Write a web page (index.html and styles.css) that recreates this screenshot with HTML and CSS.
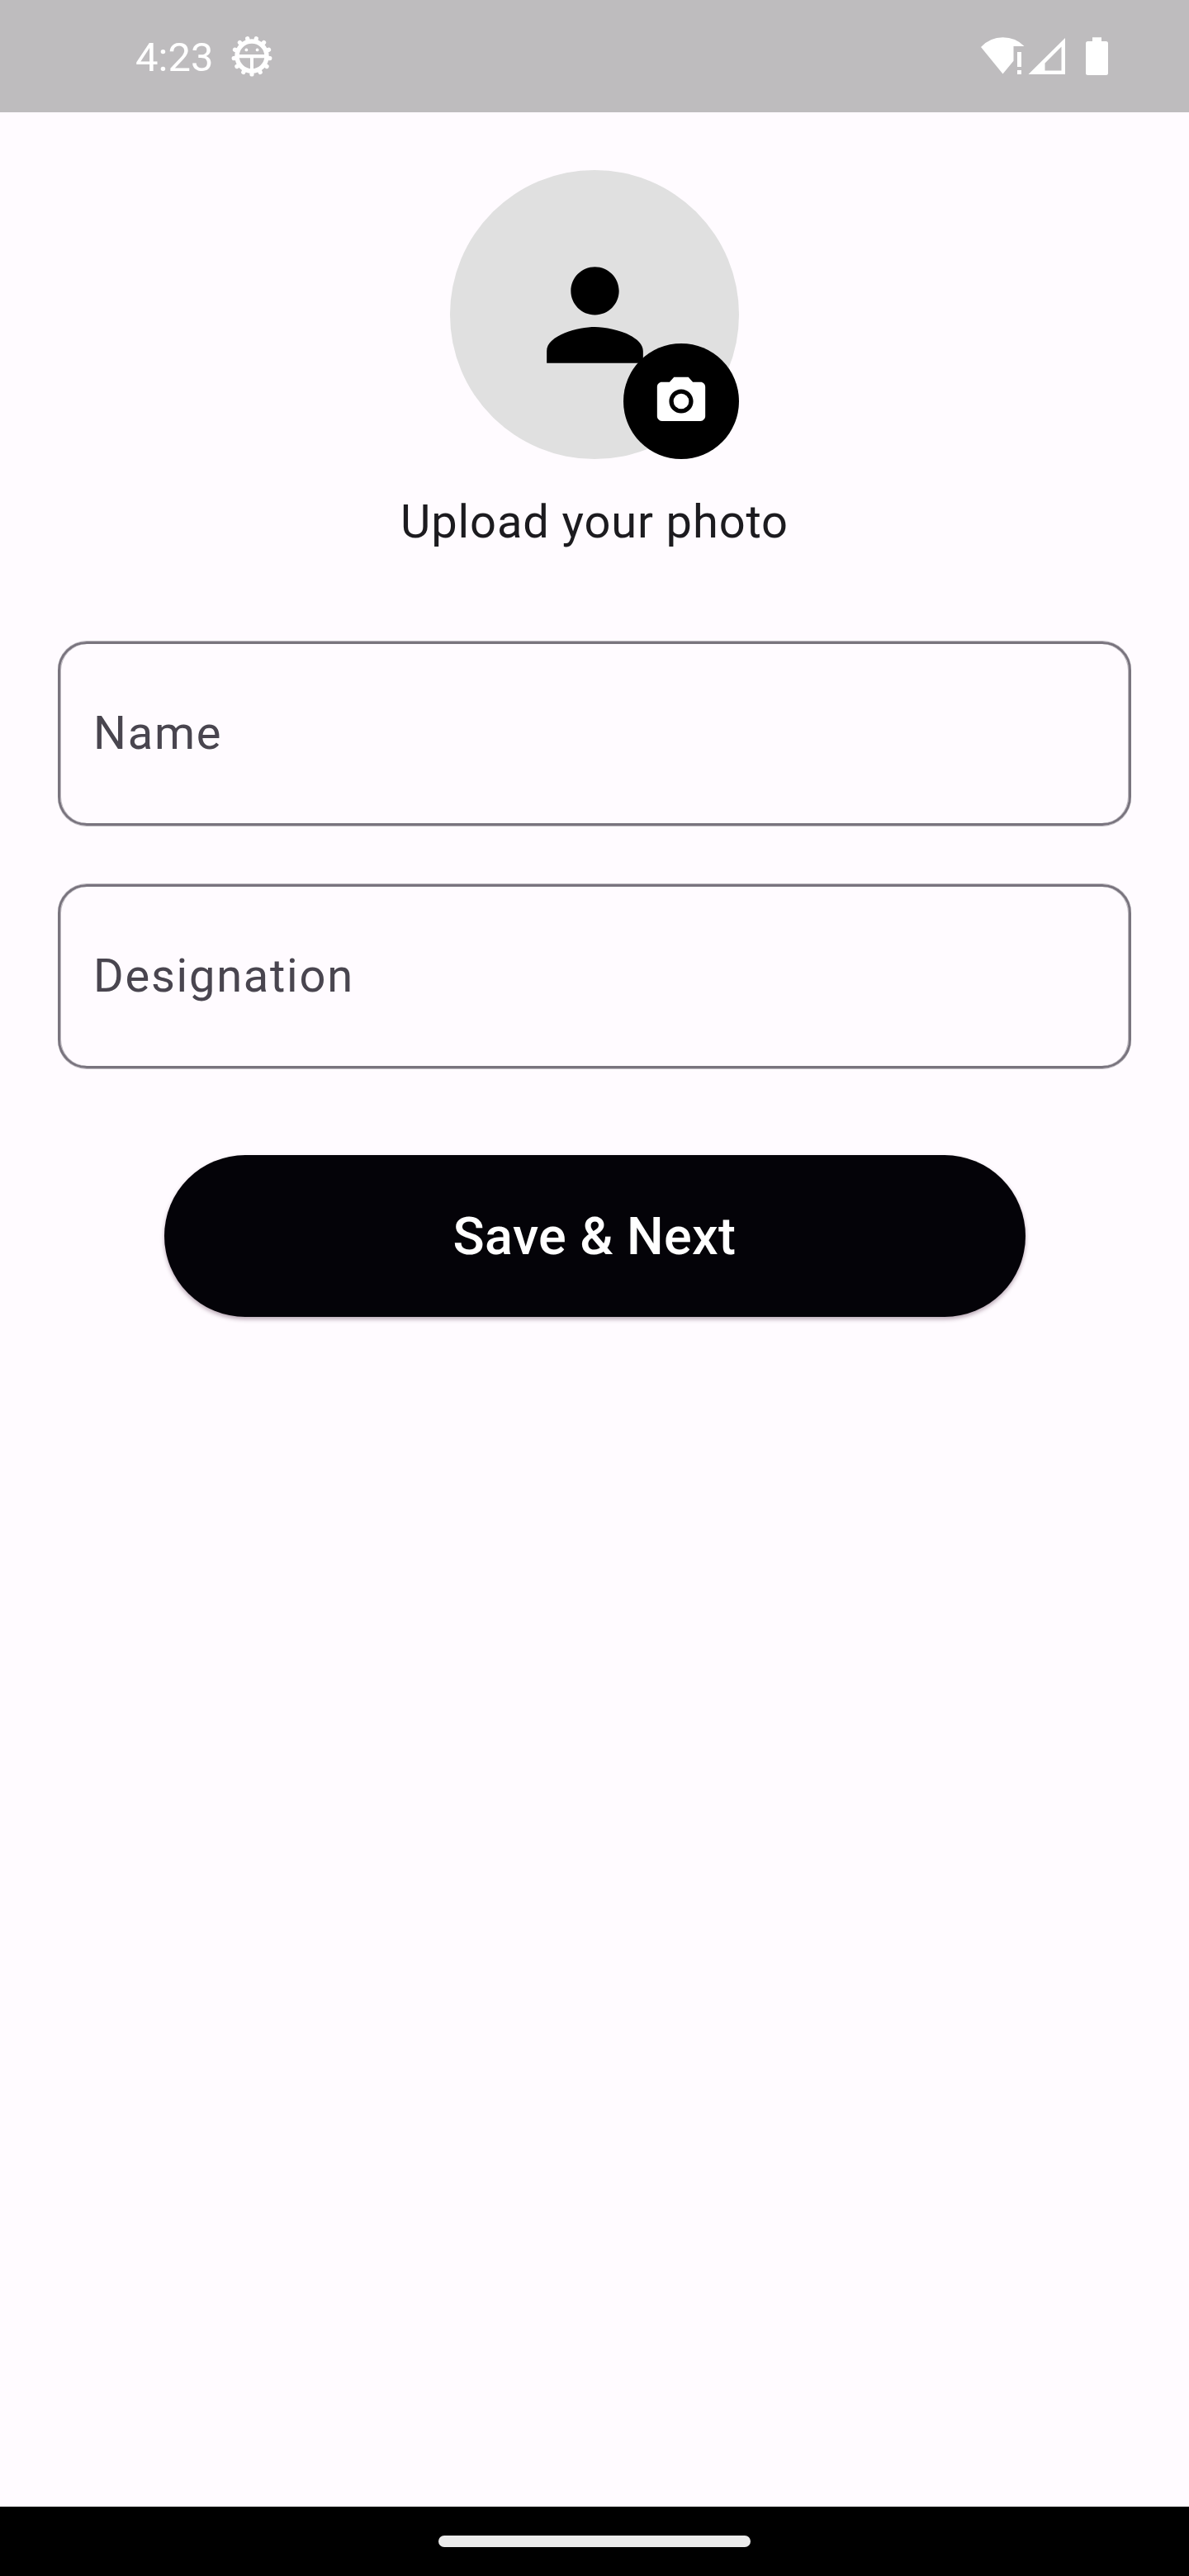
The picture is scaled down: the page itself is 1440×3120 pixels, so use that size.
FILE: index.html
```html
<!DOCTYPE html>
<html lang="en">
<head>
<meta charset="utf-8">
<title>Profile setup</title>
<link rel="stylesheet" href="styles.css">
</head>
<body>
<div class="screen">
  <header class="status-bar">
    <div class="status-left">
      <span class="clock">4:23</span>
      <svg class="gear" viewBox="0 0 50 50" width="50" height="50" fill="#fff">
        <circle cx="25" cy="25" r="18" fill="none" stroke="#fff" stroke-width="5.400"/>
        <path d="M9 23h32v4.200H27v16h-4V27.200H9z"/>
        <circle cx="18.400" cy="17.400" r="1.900"/><circle cx="31.600" cy="17.400" r="1.900"/>
        <g fill="none" stroke="#fff" stroke-width="5.200" stroke-linecap="round">
          <path id="tooth" d="M25 44v3"/>
          <use href="#tooth" transform="rotate(27.7 25 25)"/><use href="#tooth" transform="rotate(55.4 25 25)"/>
          <use href="#tooth" transform="rotate(83 25 25)"/><use href="#tooth" transform="rotate(110.7 25 25)"/>
          <use href="#tooth" transform="rotate(138.4 25 25)"/><use href="#tooth" transform="rotate(166 25 25)"/>
          <use href="#tooth" transform="rotate(-27.7 25 25)"/><use href="#tooth" transform="rotate(-55.4 25 25)"/>
          <use href="#tooth" transform="rotate(-83 25 25)"/><use href="#tooth" transform="rotate(-110.7 25 25)"/>
          <use href="#tooth" transform="rotate(-138.4 25 25)"/><use href="#tooth" transform="rotate(-166 25 25)"/>
        </g>
      </svg>
    </div>
    <svg class="signals" viewBox="0 0 155 46" width="155" height="46" fill="#fff">
      <path d="M0 12Q11 .3 26.500 .3T52.500 11H39.500V28.800L26.500 44.500z"/>
      <path d="M44 18h5v18h-5zM44 40h5v5h-5z"/>
      <path fill-rule="evenodd" d="M102 1v44H57.500zM97.500 11.500L77.500 31.500V40.500H97.500z"/>
      <path d="M135 .3h11V5h5.500q2.500 0 2.500 2.500v36q0 2.500-2.500 2.500h-22q-2.500 0-2.500-2.500V7.500Q127 5 129.500 5H135z"/>
    </svg>
  </header>
  <main class="content">
    <div class="avatar">
      <svg class="person" viewBox="0 0 24 24"><path d="M12 12c2.210 0 4-1.790 4-4s-1.790-4-4-4-4 1.790-4 4 1.790 4 4 4zm0 2c-2.670 0-8 1.340-8 4v2h16v-2c0-2.660-5.330-4-8-4z"/></svg>
      <button class="camera" aria-label="Choose photo">
        <svg viewBox="0 0 24 24" width="70" height="70" fill="#fff"><circle cx="12" cy="12" r="3.200"/><path d="M9 2L7.170 4H4c-1.100 0-2 .9-2 2v12.200c0 1.100.9 2 2 2h16c1.100 0 2-.9 2-2V6c0-1.100-.9-2-2-2h-3.170L15 2H9zm3 15c-2.760 0-5-2.240-5-5s2.240-5 5-5 5 2.240 5 5-2.240 5-5 5z"/></svg>
      </button>
    </div>
    <p class="caption">Upload your photo</p>
    <div class="field">Name</div>
    <div class="field">Designation</div>
    <button class="save">Save &amp; Next</button>
  </main>
  <footer class="nav-bar"><div class="handle"></div></footer>
</div>
</body>
</html>
```
FILE: styles.css
```css
* { box-sizing: border-box; }
body { margin: 0; font-family: Roboto, sans-serif; }
.screen { width: 1440px; height: 3120px; display: flex; flex-direction: column; background: #fffbff; }
.status-bar { height: 136px; flex: none; background: #bebcbe; display: flex; justify-content: space-between; align-items: flex-start; padding: 0 97px 0 164px; }
.status-left { display: flex; }
.clock { margin-top: 41px; width: 116px; font-size: 49px; line-height: 57px; color: #fff; }
.gear { margin-top: 43px; }
.signals { margin-top: 45px; }
.content { flex: 1; display: flex; flex-direction: column; align-items: center; padding: 70px 70px 0; }
.avatar { position: relative; width: 350px; height: 350px; border-radius: 50%; background: #e0e0e0; display: flex; align-items: center; justify-content: center; }
.person { width: 175px; height: 175px; }
.camera { position: absolute; right: 0; bottom: 0; width: 140px; height: 140px; padding: 0; border: 0; border-radius: 50%; background: #000; display: flex; align-items: center; justify-content: center; }
.caption { margin: 34px 0 103px; font-size: 56px; line-height: 84px; letter-spacing: .875px; color: #1c1b1f; }
.field { width: 100%; height: 223px; margin-bottom: 71px; padding: 0 0 2px 40px; border: 3px solid #79747e; border-radius: 35px; box-shadow: 0 1px 0 #79747e80, 0 -1px 0 #79747e80, inset 1px 0 0 #79747e80, inset -1px 0 0 #79747e80; display: flex; align-items: center; font-size: 56px; letter-spacing: 1.75px; color: #49454f; }
.save { width: 1043px; height: 196px; margin-top: 34px; padding: 0; border: 0; border-radius: 98px; background: #040308; box-shadow: 0 3px 5px rgba(60, 20, 50, .35); color: #fff; font: 500 63px Roboto, sans-serif; letter-spacing: .35px; }
.nav-bar { height: 84px; flex: none; background: #000; display: flex; justify-content: center; padding-top: 35px; }
.handle { width: 378px; height: 14px; border-radius: 7px; background: #ebebeb; }
```
